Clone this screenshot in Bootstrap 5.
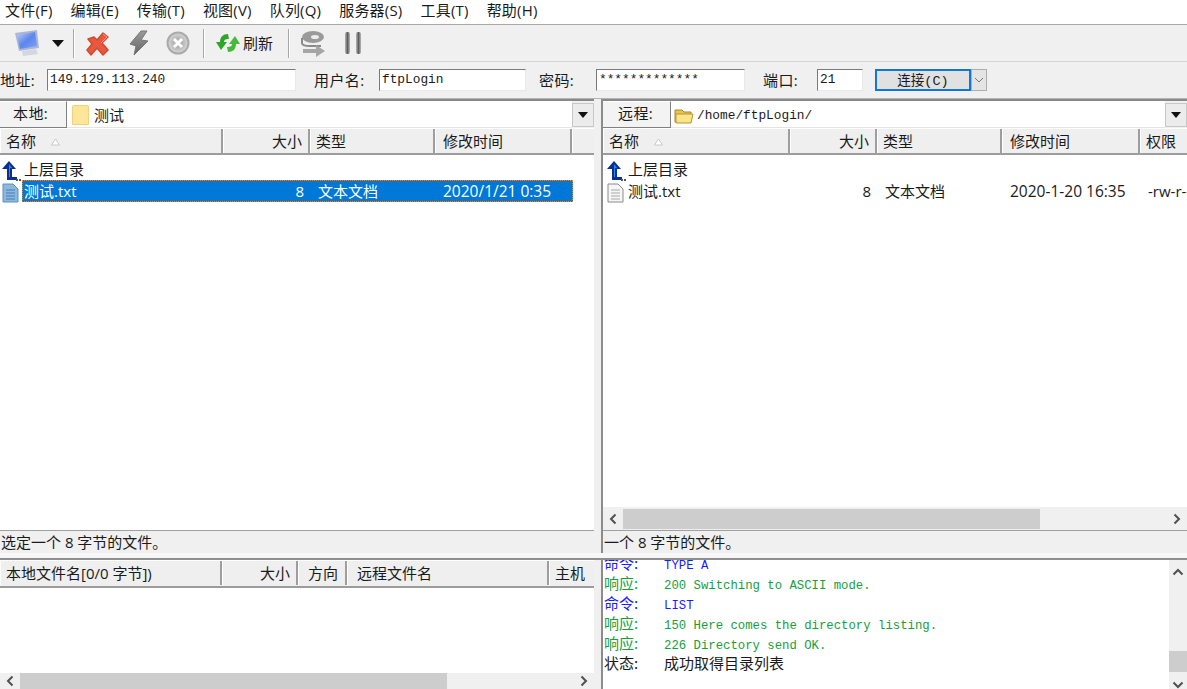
<!DOCTYPE html>
<html lang="zh">
<head>
<meta charset="UTF-8">
<title>FileZilla</title>
<link href="https://cdn.jsdelivr.net/npm/bootstrap@5.3.2/dist/css/bootstrap.min.css" rel="stylesheet">
<style>
html, body { height: 100%; overflow: hidden; }
body { background: #f0f0f0; color: #1a1a1a; font: 15px/20px "Open Sans", "Noto Sans CJK SC", sans-serif; }
.app { width: 1187px; height: 689px; }
.mono { font-family: "Liberation Mono", "Noto Sans CJK SC", monospace; font-size: 12.8px; }

/* menu + toolbar */
.menubar { height: 25px; background: #fff; border-bottom: 1px solid #a9a9a9; padding-left: 5px; gap: 18px; }
.menubar span { line-height: 21px; letter-spacing: .2px; }
.toolbar { height: 37px; padding-left: 14px; border-bottom: 1px solid #d4d4d4; }
.tsep { width: 2px; height: 29px; background: #a8a8a8; border-right: 1px solid #fff; }
.t-arrow { margin-left: 12px; }
.t-sep1 { margin-left: 9px; }
.t-x { margin-left: 10px; }
.t-bolt { margin-left: 18px; }
.t-stop { margin-left: 16px; }
.t-sep2 { margin-left: 13px; }
.t-refresh { margin-left: 10px; }
.t-label { margin-left: 2px; }
.t-sep3 { margin-left: 15px; }
.t-queue { margin-left: 11px; }
.t-pause { margin-left: 20px; }

/* quick connect */
.quick { height: 37px; border-bottom: 1px solid #b4b4b4; }
.quick label { letter-spacing: .4px; white-space: nowrap; }
.qinput { height: 22px; background: #fff; border: 1px solid #e8e8e8; border-top-color: #7a7a7a; border-left-color: #7a7a7a; padding-left: 2px; line-height: 20px; overflow: hidden; white-space: nowrap; }
.l-addr { width: 47px; flex: none; }
.l-user { width: 65px; flex: none; margin-left: 18px; }
.l-pass { width: 57px; flex: none; margin-left: 13px; }
.l-port { width: 54px; flex: none; margin-left: 18px; }
.i-addr { width: 249px; } .i-user { width: 147px; } .i-pass { width: 149px; } .i-port { width: 46px; }
.connect { width: 96px; height: 22px; margin-left: 12px; background: #e1e1e1; border: 2px solid #0f78d4; line-height: 19px; padding-top: 1px; text-align: center; font-size: 13.5px; }
.connect-drop { width: 16px; height: 22px; background: #e4e4e4; border: 1px solid #adadad; }

/* panes */
.upper { height: 454px; }
.lower { height: 129px; }
.side { width: 594px; }
.side-r { width: 586px; border-left: 2px solid #8c8c8c; margin-left: -2px; }
.vsplit { width: 9px; }
.topedge { border-top: 2px solid #8a8a8a; }
.hsplit { height: 7px; background: #f7f7f7; border-bottom: 2px solid #8f8f8f; }
.sitetab { height: 27px; background: #f3f3f3; border-right: 1px solid #808080; border-bottom: 1px solid #808080; border-top: 1px solid #fff; line-height: 22px; letter-spacing: .4px; }
.tab-l { width: 67px; padding-left: 13px; }
.tab-r { width: 68px; padding-left: 15px; }
.pathbox { background: #fff; border-bottom: 1px solid #e4e4e4; padding: 2px 0 0 5px; gap: 5px; }
.pathbox-r { padding: 4px 0 0 3px; gap: 3px; }
.pathdrop { width: 22px; height: 24px; background: #ececec; border: 1px solid #c8c8c8; margin-top: 2px; }

.coltop { height: 27px; background: #efefef; border-top: 1px solid #fff; border-bottom: 2px solid #9c9c9c; }
.coltop-low { height: 28px; }
.colh { height: 24px; line-height: 25px; padding: 0 6px; border-right: 2px solid #9e9e9e; box-shadow: inset 1px 0 #fff; white-space: nowrap; overflow: hidden; flex: none; }
.colh:last-child { border-right: 0; flex: 1; }
.sortmark { margin-left: 15px; vertical-align: 1px; }
.pl-8px { padding-left: 8px; }
.pl-10px { padding-left: 10px; }

.w223 { width: 223px; } .w87 { width: 87px; } .w125 { width: 125px; } .w137 { width: 137px; }
.w187 { width: 187px; } .w138 { width: 138px; }
.w222 { width: 222px; } .w76 { width: 76px; } .w49 { width: 49px; } .w202 { width: 202px; }

.filelist { background: #fff; padding-top: 3px; overflow: hidden; }
.frow { height: 22px; line-height: 22px; white-space: nowrap; }
.ficon { width: 22px; flex: none; padding-left: 2px; }
.ficon-r { width: 23px; padding-left: 4px; }
.cname { flex: none; padding-left: 2px; }
.cnum { flex: none; width: 87px; text-align: right; padding-right: 6px; }
.ctype { flex: none; width: 125px; padding-left: 8px; }
.ctime { flex: none; padding-left: 8px; font-size: 15.5px; }
.cperm { flex: 1; min-width: 0; overflow: hidden; padding-left: 8px; }
.cw-l { width: 201px; } .cw-r { width: 164px; }
.tw-l { width: 130px; } .tw-r { width: 138px; }
.selrow { background: #0078d7; color: #fff; outline: 1px dotted #e08a3a; outline-offset: -1px; width: 551px; }

.hbar { background: #f0f0f0; flex: none; }
.hbar-r { height: 23px; }
.hbar-l { height: 16px; }
.harrow { width: 20px; flex: none; line-height: 0; }
.hthumb { background: #cdcdcd; }
.thumb-r { width: 417px; height: 20px; }
.thumb-l { width: 427px; height: 16px; }
.statusline { height: 23px; line-height: 22px; border-top: 1px solid #a0a0a0; padding-left: 1px; }

.loglist { background: #fff; overflow: hidden; }
.logtxt { padding-left: 1px; overflow: hidden; min-width: 0; }
.logline { height: 20px; line-height: 20px; white-space: pre; font-size: 12.3px; }
.logline b { font-weight: normal; display: inline-block; width: 60px; font-family: "Noto Sans CJK SC", sans-serif; font-size: 15px; }
.logline i { font-style: normal; font-family: "Noto Sans CJK SC", sans-serif; font-size: 15px; }
.c-cmd { color: #1a1aff; }
.c-res { color: #14a03c; }
.c-sta { color: #1a1a1a; }
.first { margin-top: -7px; }
.vbar { width: 18px; background: #f0f0f0; flex: none; }
.vend { height: 24px; flex: none; }
.vthumb { height: 21px; background: #cdcdcd; margin-top: 67px; flex: none; }
</style>
</head>
<body>
<div class="app d-flex flex-column">

  <div class="menubar d-flex flex-shrink-0">
    <span>文件(F)</span><span>编辑(E)</span><span>传输(T)</span><span>视图(V)</span><span>队列(Q)</span><span>服务器(S)</span><span>工具(T)</span><span>帮助(H)</span>
  </div>

  <div class="toolbar d-flex align-items-center flex-shrink-0">
    <svg width="26" height="28" viewBox="0 0 26 28">
      <defs>
        <linearGradient id="scr" x1="0" y1="0" x2="1" y2="1"><stop offset="0" stop-color="#bcd2f8"/><stop offset=".5" stop-color="#5c86ee"/><stop offset="1" stop-color="#7ea4f4"/></linearGradient>
        <linearGradient id="barg" x1="0" y1="0" x2="1" y2="0"><stop offset="0" stop-color="#b8b8b8"/><stop offset=".5" stop-color="#5e5e5e"/><stop offset="1" stop-color="#b8b8b8"/></linearGradient>
        <linearGradient id="boltg" x1="0" y1="0" x2="0" y2="1"><stop offset="0" stop-color="#9a9a9a"/><stop offset="1" stop-color="#666"/></linearGradient>
        <radialGradient id="stopg"><stop offset="0" stop-color="#9c9c9c"/><stop offset="1" stop-color="#d8d8d8"/></radialGradient>
      </defs>
      <path d="M1 4 L23 1 L25 19 L5 22 Z" fill="#aeb6d4"/>
      <path d="M3 6 L21 3 L23 17 L6 20 Z" fill="url(#scr)"/>
      <path d="M8 22 L22 20 L24 25 L9 27 Z" fill="#d4d6e0"/>
    </svg>
    <svg class="t-arrow" width="12" height="7" viewBox="0 0 12 7"><path d="M0 0H12L6 7Z" fill="#111"/></svg>
    <div class="tsep t-sep1"></div>
    <svg class="t-x" width="25" height="25" viewBox="0 0 25 25"><path d="M3 8 L9 6 L12 9 L18 2 L23 6 L17 12 L23 19 L18 24 L12 17 L6 24 L2 19 L7 13 Z" fill="#e8583c" stroke="#d04a30" stroke-width="1.500" stroke-linejoin="round"/><path d="M18 3 L22 6 L16 12" fill="none" stroke="#f49a84"/></svg>
    <svg class="t-bolt" width="22" height="26" viewBox="0 0 22 26"><path d="M13 1 L2 14 L8 16 L6 25 L20 11 L13 10 L19 1 Z" fill="url(#boltg)" stroke="#777" stroke-linejoin="round"/></svg>
    <svg class="t-stop" width="24" height="24" viewBox="0 0 24 24"><circle cx="12" cy="12" r="10.500" fill="url(#stopg)" stroke="#aaa" stroke-width="2"/><path d="M8 8 L16 16 M16 8 L8 16" stroke="#fff" stroke-width="3"/></svg>
    <div class="tsep t-sep2"></div>
    <svg class="t-refresh" width="26" height="24" viewBox="0 0 26 24">
      <path d="M13 3 C8 3 5 6 5 11 H1 L6 19 L12 11 H9 C9 9 10 8 14 8 Z" fill="#2fa52a"/>
      <path d="M13 21 C18 21 21 18 21 13 H25 L20 5 L14 13 H17 C17 15 16 16 12 16 Z" fill="#46b83c"/>
    </svg>
    <span class="t-label">刷新</span>
    <div class="tsep t-sep3"></div>
    <svg class="t-queue" width="24" height="27" viewBox="0 0 24 27"><ellipse cx="12" cy="7" rx="11" ry="6" fill="#9a9a9a"/><ellipse cx="14" cy="7" rx="4" ry="2" fill="#ededed"/><path d="M1 8 V13 C1 15 5 16 9 16 H20" fill="none" stroke="#8a8a8a" stroke-width="2"/><path d="M2 19 H15 V15 L24 21 L15 27 V23 H2 Z" fill="#a6a6a6"/></svg>
    <svg class="t-pause" width="16" height="24" viewBox="0 0 16 24"><rect x="0" y="1" width="5" height="22" rx="2" fill="url(#barg)"/><rect x="11" y="1" width="5" height="22" rx="2" fill="url(#barg)"/></svg>
  </div>

  <div class="quick d-flex align-items-center flex-shrink-0">
    <label class="l-addr">地址:</label><div class="qinput i-addr mono">149.129.113.240</div>
    <label class="l-user">用户名:</label><div class="qinput i-user mono">ftpLogin</div>
    <label class="l-pass">密码:</label><div class="qinput i-pass mono">*************</div>
    <label class="l-port">端口:</label><div class="qinput i-port mono">21</div>
    <div class="connect mono">连接(C)</div>
    <div class="connect-drop d-flex align-items-center justify-content-center"><svg width="10" height="6" viewBox="0 0 10 6"><path d="M1 1L5 5L9 1" fill="none" stroke="#777"/></svg></div>
  </div>

  <div class="upper d-flex flex-shrink-0">
    <div class="side d-flex flex-column flex-shrink-0 topedge">
      <div class="d-flex flex-shrink-0">
        <div class="sitetab tab-l">本地:</div>
        <div class="pathbox d-flex align-items-center flex-grow-1">
          <svg width="17" height="20" viewBox="0 0 17 20"><path d="M.5 1.500Q.5 .5 1.500 .5H15.500Q16.500 .5 16.500 1.500V19.500H.5Z" fill="#fde69a" stroke="#eed27c"/></svg>
          <span>测试</span>
        </div>
        <div class="pathdrop d-flex align-items-center justify-content-center"><svg width="10" height="6" viewBox="0 0 10 6"><path d="M0 0H10L5 6Z" fill="#111"/></svg></div>
      </div>
      <div class="coltop d-flex flex-shrink-0">
        <div class="colh w223">名称<svg class="sortmark" width="9" height="8" viewBox="0 0 9 8"><path d="M4.500 1L8.500 7H.5Z" fill="#fff" stroke="#c8c8c8"/></svg></div>
        <div class="colh w87 text-end">大小</div>
        <div class="colh w125">类型</div>
        <div class="colh w137 pl-8px">修改时间</div>
        <div class="colh"></div>
      </div>
      <div class="filelist flex-grow-1">
        <div class="frow d-flex">
          <div class="ficon"><svg width="20" height="20" viewBox="0 0 20 20"><path d="M7 0L14 8H10V16H15V19H5V8H0Z" fill="#0a2f90"/><path d="M7 3L10 7H8V16H7Z" fill="#2a8ae8"/><path d="M14 18h2v2h-2zM17 18h2v2h-2z" fill="#555"/></svg></div>
          <div class="cname">上层目录</div>
        </div>
        <div class="frow d-flex">
          <div class="ficon"><svg width="17" height="20" viewBox="0 0 17 20"><path d="M1 1H11L16 6V19H1Z" fill="#8db8dc" stroke="#5a90c0"/><path d="M4 7H13M4 10H13M4 13H13M4 16H13" stroke="#3f7fb8"/></svg></div>
          <div class="selrow d-flex">
            <div class="cname cw-l">测试.txt</div>
            <div class="cnum">8</div>
            <div class="ctype">文本文档</div>
            <div class="ctime tw-l">2020/1/21 0:35</div>
          </div>
        </div>
      </div>
      <div class="statusline flex-shrink-0">选定一个 8 字节的文件。</div>
    </div>

    <div class="vsplit flex-shrink-0"></div>

    <div class="side-r d-flex flex-column flex-shrink-0 topedge">
      <div class="d-flex flex-shrink-0">
        <div class="sitetab tab-r">远程:</div>
        <div class="pathbox pathbox-r d-flex align-items-center flex-grow-1">
          <svg width="20" height="18" viewBox="0 0 20 18"><path d="M1 3H8L10 5H17V15H1Z" fill="#e8c44c" stroke="#a8862a"/><path d="M2 7H19L17 16H2Z" fill="#fbe38a" stroke="#b8962e"/></svg>
          <span class="mono">/home/ftpLogin/</span>
        </div>
        <div class="pathdrop d-flex align-items-center justify-content-center"><svg width="10" height="6" viewBox="0 0 10 6"><path d="M0 0H10L5 6Z" fill="#111"/></svg></div>
      </div>
      <div class="coltop d-flex flex-shrink-0">
        <div class="colh w187">名称<svg class="sortmark" width="9" height="8" viewBox="0 0 9 8"><path d="M4.500 1L8.500 7H.5Z" fill="#fff" stroke="#c8c8c8"/></svg></div>
        <div class="colh w87 text-end">大小</div>
        <div class="colh w125">类型</div>
        <div class="colh w138 pl-8px">修改时间</div>
        <div class="colh">权限</div>
      </div>
      <div class="filelist flex-grow-1">
        <div class="frow d-flex">
          <div class="ficon ficon-r"><svg width="20" height="20" viewBox="0 0 20 20"><path d="M7 0L14 8H10V16H15V19H5V8H0Z" fill="#0a2f90"/><path d="M7 3L10 7H8V16H7Z" fill="#2a8ae8"/><path d="M14 18h2v2h-2zM17 18h2v2h-2z" fill="#555"/></svg></div>
          <div class="cname">上层目录</div>
        </div>
        <div class="frow d-flex">
          <div class="ficon ficon-r"><svg width="17" height="20" viewBox="0 0 17 20"><path d="M1 1H11L16 6V19H1Z" fill="#f6f6f6" stroke="#8a8a8a"/><path d="M4 7H13M4 10H13M4 13H13M4 16H13" stroke="#a8a8a8"/></svg></div>
          <div class="cname cw-r">测试.txt</div>
          <div class="cnum">8</div>
          <div class="ctype">文本文档</div>
          <div class="ctime tw-r">2020-1-20 16:35</div>
          <div class="cperm">-rw-r--r--</div>
        </div>
      </div>
      <div class="hbar hbar-r d-flex align-items-center">
        <div class="harrow text-center"><svg width="8" height="12" viewBox="0 0 8 12"><path d="M6.500 1.500L2 6L6.500 10.500" fill="none" stroke="#505050" stroke-width="2"/></svg></div>
        <div class="hthumb thumb-r"></div>
        <div class="flex-grow-1"></div>
        <div class="harrow text-center"><svg width="8" height="12" viewBox="0 0 8 12"><path d="M1.500 1.500L6 6L1.500 10.500" fill="none" stroke="#505050" stroke-width="2"/></svg></div>
      </div>
      <div class="statusline flex-shrink-0">一个 8 字节的文件。</div>
    </div>
  </div>

  <div class="hsplit flex-shrink-0"></div>

  <div class="lower d-flex flex-shrink-0">
    <div class="side d-flex flex-column flex-shrink-0">
      <div class="coltop coltop-low d-flex flex-shrink-0">
        <div class="colh w222">本地文件名[0/0 字节])</div>
        <div class="colh w76 text-end">大小</div>
        <div class="colh w49 pl-10px">方向</div>
        <div class="colh w202 pl-10px">远程文件名</div>
        <div class="colh">主机</div>
      </div>
      <div class="filelist flex-grow-1"></div>
      <div class="hbar hbar-l d-flex align-items-center">
        <div class="harrow text-center"><svg width="8" height="12" viewBox="0 0 8 12"><path d="M6.500 1.500L2 6L6.500 10.500" fill="none" stroke="#505050" stroke-width="2"/></svg></div>
        <div class="hthumb thumb-l"></div>
        <div class="flex-grow-1"></div>
        <div class="harrow text-center"><svg width="8" height="12" viewBox="0 0 8 12"><path d="M1.500 1.500L6 6L1.500 10.500" fill="none" stroke="#505050" stroke-width="2"/></svg></div>
      </div>
    </div>

    <div class="vsplit flex-shrink-0"></div>

    <div class="side-r loglist d-flex flex-shrink-0">
      <div class="logtxt flex-grow-1 mono">
        <div class="logline first c-cmd"><b>命令:</b>TYPE A</div>
        <div class="logline c-res"><b>响应:</b>200 Switching to ASCII mode.</div>
        <div class="logline c-cmd"><b>命令:</b>LIST</div>
        <div class="logline c-res"><b>响应:</b>150 Here comes the directory listing.</div>
        <div class="logline c-res"><b>响应:</b>226 Directory send OK.</div>
        <div class="logline c-sta"><b>状态:</b><i>成功取得目录列表</i></div>
      </div>
      <div class="vbar d-flex flex-column align-items-center">
        <div class="vend d-flex align-items-center"><svg width="12" height="8" viewBox="0 0 12 8"><path d="M1.500 6.500L6 2L10.500 6.500" fill="none" stroke="#505050" stroke-width="2"/></svg></div>
        <div class="vthumb w-100"></div>
        <div class="flex-grow-1"></div>
        <div class="d-flex align-items-center"><svg width="12" height="8" viewBox="0 0 12 8"><path d="M1.500 1.500L6 6L10.500 1.500" fill="none" stroke="#505050" stroke-width="2"/></svg></div>
      </div>
    </div>
  </div>
</div>
</body>
</html>
